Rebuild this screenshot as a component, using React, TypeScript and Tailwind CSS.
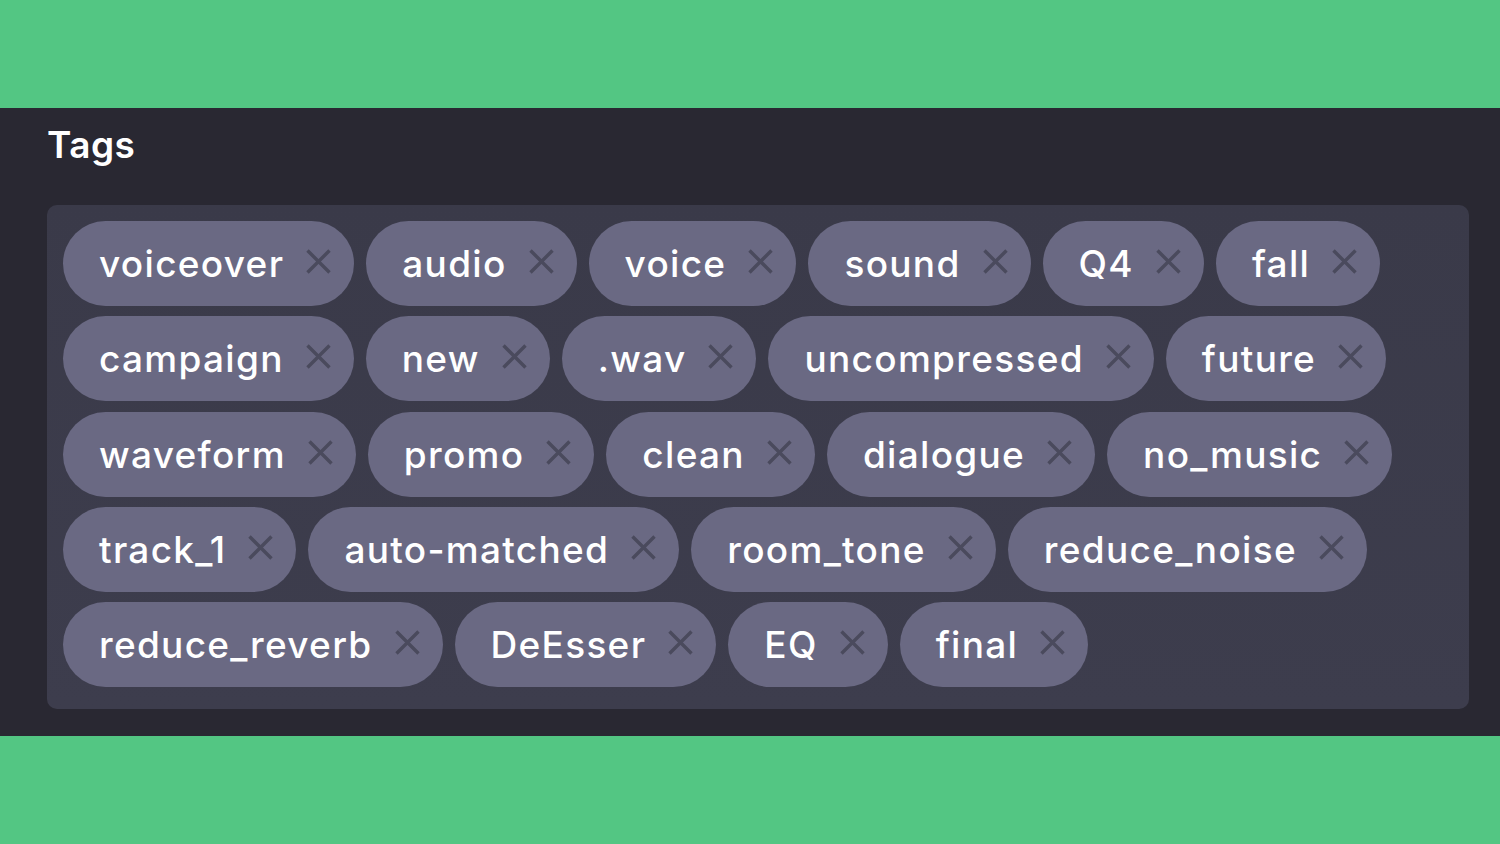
const tags = [
  "voiceover", "audio", "voice", "sound", "Q4", "fall",
  "campaign", "new", ".wav", "uncompressed", "future",
  "waveform", "promo", "clean", "dialogue", "no_music",
  "track_1", "auto-matched", "room_tone", "reduce_noise",
  "reduce_reverb", "DeEsser", "EQ", "final",
];

function CloseIcon() {
  return (
    <svg width="25" height="25" viewBox="0 0 25 25" fill="none" stroke="currentColor" strokeWidth="3.4">
      <path d="M1.5 1.5 23.5 23.5M23.5 1.5 1.5 23.5" />
    </svg>
  );
}

function Tag({ label }: { label: string }) {
  return (
    <div className="flex h-[85px] items-center rounded-full bg-[#6a6983] pl-[36px] pr-[23px]">
      <span className="text-[37px] font-medium leading-none tracking-[1.3px] text-white">{label}</span>
      <button className="ml-[22px] -mt-[4px] flex items-center text-[#4a4a5d]">
        <CloseIcon />
      </button>
    </div>
  );
}

export default function App() {
  return (
    <div className="min-h-screen bg-[#53c683] pt-[108px] font-['Inter',sans-serif]">
      <section className="bg-[#292832] pl-[47px] pr-[31px] pt-[18px] pb-[27px]">
        <h1 className="text-[37px] font-semibold leading-none tracking-[0.5px] text-white">Tags</h1>
        <div className="mt-[42px] flex flex-wrap gap-x-[12px] gap-y-[10.25px] rounded-[10px] bg-gradient-to-b from-[#3a3a49] to-[#3d3d4d] px-[16px] pt-[16px] pb-[22px]">
          {tags.map((tag) => (
            <Tag key={tag} label={tag} />
          ))}
        </div>
      </section>
    </div>
  );
}
